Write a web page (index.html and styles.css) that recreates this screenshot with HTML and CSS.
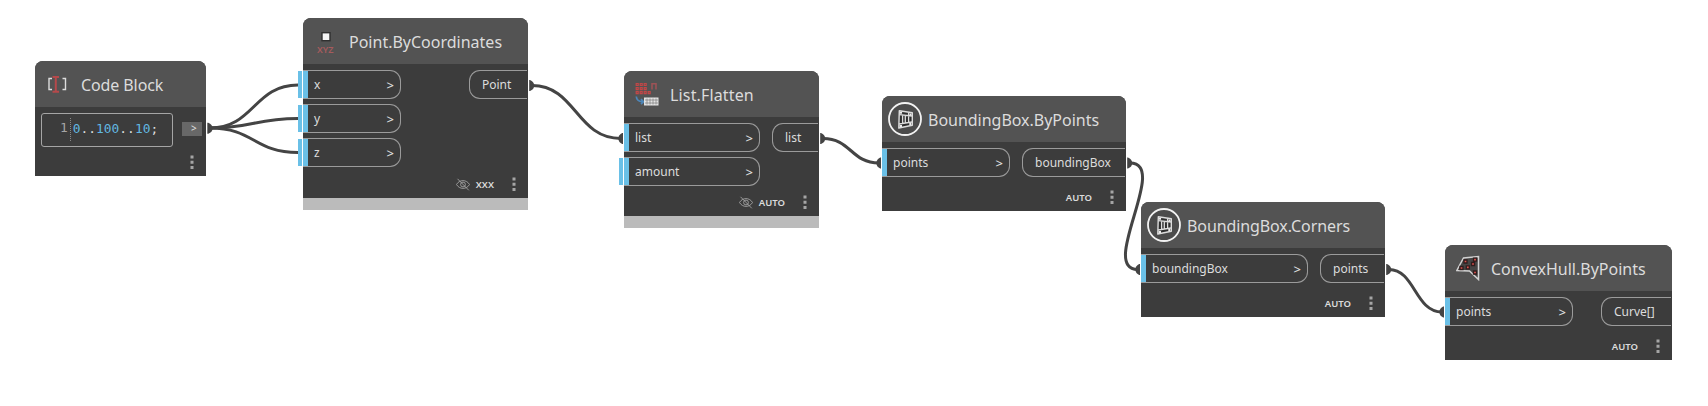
FILE: index.html
```
<!DOCTYPE html>
<html lang="en">
<head>
<meta charset="utf-8">
<title>Graph</title>
<link rel="stylesheet" href="styles.css">
</head>
<body>
<svg width="0" height="0" class="defs">
  <symbol id="dots" viewBox="0 0 4 14"><path d="M.5 .5h3v3h-3zM.5 5.7h3v3h-3zM.5 11h3v3h-3z" fill="#a5a5a5"/></symbol>
  <symbol id="eye" viewBox="0 0 14 13"><g fill="none" stroke="#a8a8a8" stroke-width=".85"><path d="M.5 6.5C3.5 1.3 10.5 1.3 13.5 6.5C10.5 11.7 3.5 11.7 .5 6.5z"/><circle cx="7" cy="6.5" r="2.4"/><path d="M1.5 .8L12.8 12.3"/></g></symbol>
  <symbol id="box" viewBox="0 0 34 34">
    <circle cx="17" cy="17" r="16" fill="#4b4b4b" stroke="#f2f2f2" stroke-width="1.8"/>
    <path d="M11.300 8.700L24.300 10.800V23.300L10.800 26z" fill="#2e2e2e" stroke="#dcdcdc" stroke-width="1.400" stroke-linejoin="round"/>
    <path d="M11.300 12.600L24 14M11 22L24 20M14.600 13v8.500M17.300 13.500v7.500M20.600 10.800v9.500" fill="none" stroke="#dcdcdc" stroke-width="1.3"/>
    <path d="M11.600 9.800h2.500v2h-2.500zM21.500 11.500h2v2h-2zM11.500 23h2.500v2h-2.500zM21.300 21h2v2h-2z" fill="#eee"/>
  </symbol>
</svg>
<main class="canvas">
  <svg class="wires" width="1708" height="406">
    <g fill="none" stroke="#444" stroke-width="3">
      <path d="M210 128C254 128 254 85 298 85"/>
      <path d="M210 128C254 128 254 118.6 298 118.6"/>
      <path d="M210 128C254 128 254 152.4 298 152.4"/>
      <path d="M532 85.5C576 85.5 576 138.5 621 138.5"/>
      <path d="M823 138.5C851 138.5 851 163 879 163"/>
      <path d="M1130 163C1170 163 1098 269.5 1138 269.5"/>
      <path d="M1389 269.5C1415 269.5 1415 312 1442 312"/>
    </g>
    <g fill="#444">
      <path d="M207.300 122.800h1q4 1.500 4.500 5.500q-.5 4-4.500 5.500h-1z"/>
      <path d="M529.200 80h.8q4 1.500 4.300 5.500q-.3 4-4.300 5.500h-.8z"/>
      <path d="M820.200 133h.8q4 1.500 4.300 5.500q-.3 4-4.300 5.500h-.8z"/>
      <path d="M1127.200 157.500h.8q4 1.500 4.300 5.500q-.3 4-4.300 5.500h-.8z"/>
      <path d="M1386.200 264h.8q4 1.500 4.300 5.500q-.3 4-4.300 5.500h-.8z"/>
      <path d="M623 133h-.8q-3.500 1.500-4 5.500q.5 4 4 5.500h.8z"/>
      <path d="M881 157.500h-.8q-3.500 1.500-4 5.500q.5 4 4 5.500h.8z"/>
      <path d="M1140 264h-.8q-3.500 1.500-4 5.500q.5 4 4 5.500h.8z"/>
      <path d="M1444 306.500h-.8q-3.500 1.500-4 5.500q.5 4 4 5.500h.8z"/>
    </g>
  </svg>

  <section class="node code">
    <header class="head"><svg class="icon" width="24" height="24"><path d="M6 6.500H3v11h3M16.500 6.500h3v11h-3" fill="none" stroke="#ddd" stroke-width="1.4"/><path d="M6.500 5h6.500M9.800 5v14.500M6.500 19.800h6.500" fill="none" stroke="#b5494b" stroke-width="2"/></svg><h2>Code Block</h2></header>
    <div class="ports"><div class="editor"><span class="line">1</span><code><b>0</b>..<b>100</b>..<b>10</b>;</code></div><span class="run">&gt;</span></div>
    <footer class="foot"><svg class="dots"><use href="#dots"/></svg></footer>
  </section>

  <section class="node point">
    <header class="head"><svg class="icon" width="24" height="32"><rect x="8" y="7.700" width="8" height="8" fill="#f4f4f4" stroke="#303030" stroke-width="1.400"/><text x="3" y="27.800" class="xyz" textLength="16.500" lengthAdjust="spacingAndGlyphs">XYZ</text></svg><h2>Point.ByCoordinates</h2></header>
    <div class="ports">
      <div class="ins"><div class="in free"><span>x</span><i>&gt;</i></div><div class="in free"><span>y</span><i>&gt;</i></div><div class="in free"><span>z</span><i>&gt;</i></div></div>
      <div class="out">Point</div>
    </div>
    <footer class="foot"><svg class="eye"><use href="#eye"/></svg><span class="xxx">XXX</span><svg class="dots"><use href="#dots"/></svg></footer>
    <div class="strip"></div>
  </section>

  <section class="node flatten">
    <header class="head"><svg class="icon" width="24" height="24"><g fill="none" stroke="#c34747" stroke-width="1.200"><path d="M1.200 1.500h2v2h-2zM5.200 1.500h2v2h-2zM9.200 1.500h2v2h-2zM1.200 5.600h2v2h-2zM5.200 5.600h2v2h-2zM9.200 5.600h2v2h-2zM1.200 9.700h2v2h-2zM5.200 9.700h2v2h-2zM9.200 9.700h2v2h-2zM13.200 9.700h2v2h-2z"/><path d="M17 7.500V1.800h4V7.500" stroke="#9d5356" stroke-width="1.600"/></g><path d="M1.300 14.500c.2 3 2.700 5 6 5.200M6 17l2.500 2.700L6 22" fill="none" stroke="#4d86b8" stroke-width="1.700"/><path d="M9 15.500h14.500v8H9z" fill="#e4e4e4"/><path d="M10 18h13M10 21h13M12 16.500v6M15 16.500v6M18 16.500v6M21 16.500v6" stroke="#858585" stroke-width=".8"/></svg><h2>List.Flatten</h2></header>
    <div class="ports">
      <div class="ins"><div class="in"><span>list</span><i>&gt;</i></div><div class="in free"><span>amount</span><i>&gt;</i></div></div>
      <div class="out">list</div>
    </div>
    <footer class="foot"><svg class="eye"><use href="#eye"/></svg><span>AUTO</span><svg class="dots"><use href="#dots"/></svg></footer>
    <div class="strip"></div>
  </section>

  <section class="node bypoints">
    <header class="head round"><svg width="34" height="34"><use href="#box"/></svg><h2>BoundingBox.ByPoints</h2></header>
    <div class="ports"><div class="ins"><div class="in"><span>points</span><i>&gt;</i></div></div><div class="out">boundingBox</div></div>
    <footer class="foot"><span>AUTO</span><svg class="dots"><use href="#dots"/></svg></footer>
  </section>

  <section class="node corners">
    <header class="head round"><svg width="34" height="34"><use href="#box"/></svg><h2>BoundingBox.Corners</h2></header>
    <div class="ports"><div class="ins"><div class="in"><span>boundingBox</span><i>&gt;</i></div></div><div class="out">points</div></div>
    <footer class="foot"><span>AUTO</span><svg class="dots"><use href="#dots"/></svg></footer>
  </section>

  <section class="node hull">
    <header class="head"><svg class="icon" width="24" height="26"><path d="M.8 15.500L7.500 3l15-1.500v23L13.500 16z" fill="#454545" stroke="#d2d2d2" stroke-width="1.500"/><g fill="#e0524f" stroke="#301d1d" stroke-width="1.300"><path d="M8 5h3v3h-3zM17.500 3.200h3v3h-3zM15.500 7.500h3v3h-3zM4 11.500h3v3h-3zM10.300 10.800h3v3h-3zM17.500 16h3v3h-3z"/></g></svg><h2>ConvexHull.ByPoints</h2></header>
    <div class="ports"><div class="ins"><div class="in"><span>points</span><i>&gt;</i></div></div><div class="out">Curve[]</div></div>
    <footer class="foot"><span>AUTO</span><svg class="dots"><use href="#dots"/></svg></footer>
  </section>
</main>
</body>
</html>
```
FILE: styles.css
```
* { box-sizing: border-box; }
body { margin: 0; background: #fff; font-family: "Noto Sans", sans-serif; }
.defs { position: absolute; }
.canvas { position: relative; width: 1708px; height: 406px; overflow: hidden; }
.wires { position: absolute; inset: 0; }
.node { position: absolute; color: #dcdcdc; background: #3c3c3c; border-radius: 8px 8px 0 0; display: flex; flex-direction: column; }
.code { left: 35px; top: 61px; width: 171px; height: 115px; --title: -0.1px; }
.point { left: 303px; top: 18px; width: 225px; height: 192px; --in: 98px; --out: 58px; }
.flatten { left: 624px; top: 71px; width: 195px; height: 157px; --in: 136px; --out: 46px; --title: 0.15px; }
.bypoints { left: 882px; top: 96px; width: 244px; height: 115px; --in: 128px; --out: 103px; --title: -0.02px; }
.corners { left: 1141px; top: 202px; width: 244px; height: 115px; --in: 167px; --out: 64px; --title: -0.1px; }
.hull { left: 1445px; top: 245px; width: 227px; height: 115px; --in: 128px; --out: 70px; }
.head { flex: none; height: 46px; display: flex; align-items: center; gap: 11px; padding-left: 11px; background: #535353; border-radius: 8px 8px 0 0; }
.head svg { flex: none; }
.round { padding-left: 6px; gap: 6px; }
h2 { margin: 0; padding-top: 2px; font-size: 16px; line-height: 22px; font-weight: 400; white-space: nowrap; letter-spacing: var(--title, 0); }
.xyz { font-size: 8.500px; font-weight: 600; fill: #a65b5d; }
.ports { flex: 1; display: flex; justify-content: space-between; align-items: flex-start; padding: 6px 1px 0 0; }
.ins { display: flex; flex-direction: column; gap: 5px; }
.in { position: relative; width: var(--in); height: 29px; display: flex; align-items: center; justify-content: space-between; padding: 0 6px 0 11px; border: 1px solid #9b9b9b; border-left: 0; border-radius: 0 11px 11px 0; font-size: 12px; }
.in::before { content: ""; position: absolute; left: 0; top: 0; width: 5px; height: 27px; background: #6ac0e7; }
.free::after { content: ""; position: absolute; left: -5px; top: 0; width: 4px; height: 27px; background: #6ac0e7; }
.in i { font-style: normal; font-size: 13px; font-weight: 500; }
.out { width: var(--out); height: 29px; padding: 0 0 0 12px; display: flex; align-items: center; border: 1px solid #9b9b9b; border-right: 0; border-radius: 11px 0 0 11px; font-size: 12px; }
.foot { flex: none; height: 28px; display: flex; align-items: center; justify-content: flex-end; padding-right: 12px; font-size: 9.500px; font-weight: 600; }
.foot span { margin-right: 18px; }
.eye { width: 14px; height: 13px; margin-right: 6px; }
.dots { width: 4px; height: 14px; }
.strip { flex: none; height: 12px; background: #bbb; }
.editor { width: 132px; height: 34px; margin-left: 6px; border: 1px solid #a5a5a5; border-radius: 3px; display: flex; align-items: center; padding: 0 0 2px 18px; font: 12.900px/16px "DejaVu Sans Mono", monospace; }
.line { color: #a5a5a5; padding-right: 2px; border-right: 1px dotted #888; height: 23px; line-height: 20px; }
.editor code { font: inherit; padding-left: 2px; color: #ddd; }
.editor b { font-weight: 400; color: #62b9e2; }
.run { width: 20px; height: 14px; margin: 9px 3px 0 0; padding-left: 9px; background: #686868; font-size: 10px; line-height: 13px; font-weight: 500; }
```
